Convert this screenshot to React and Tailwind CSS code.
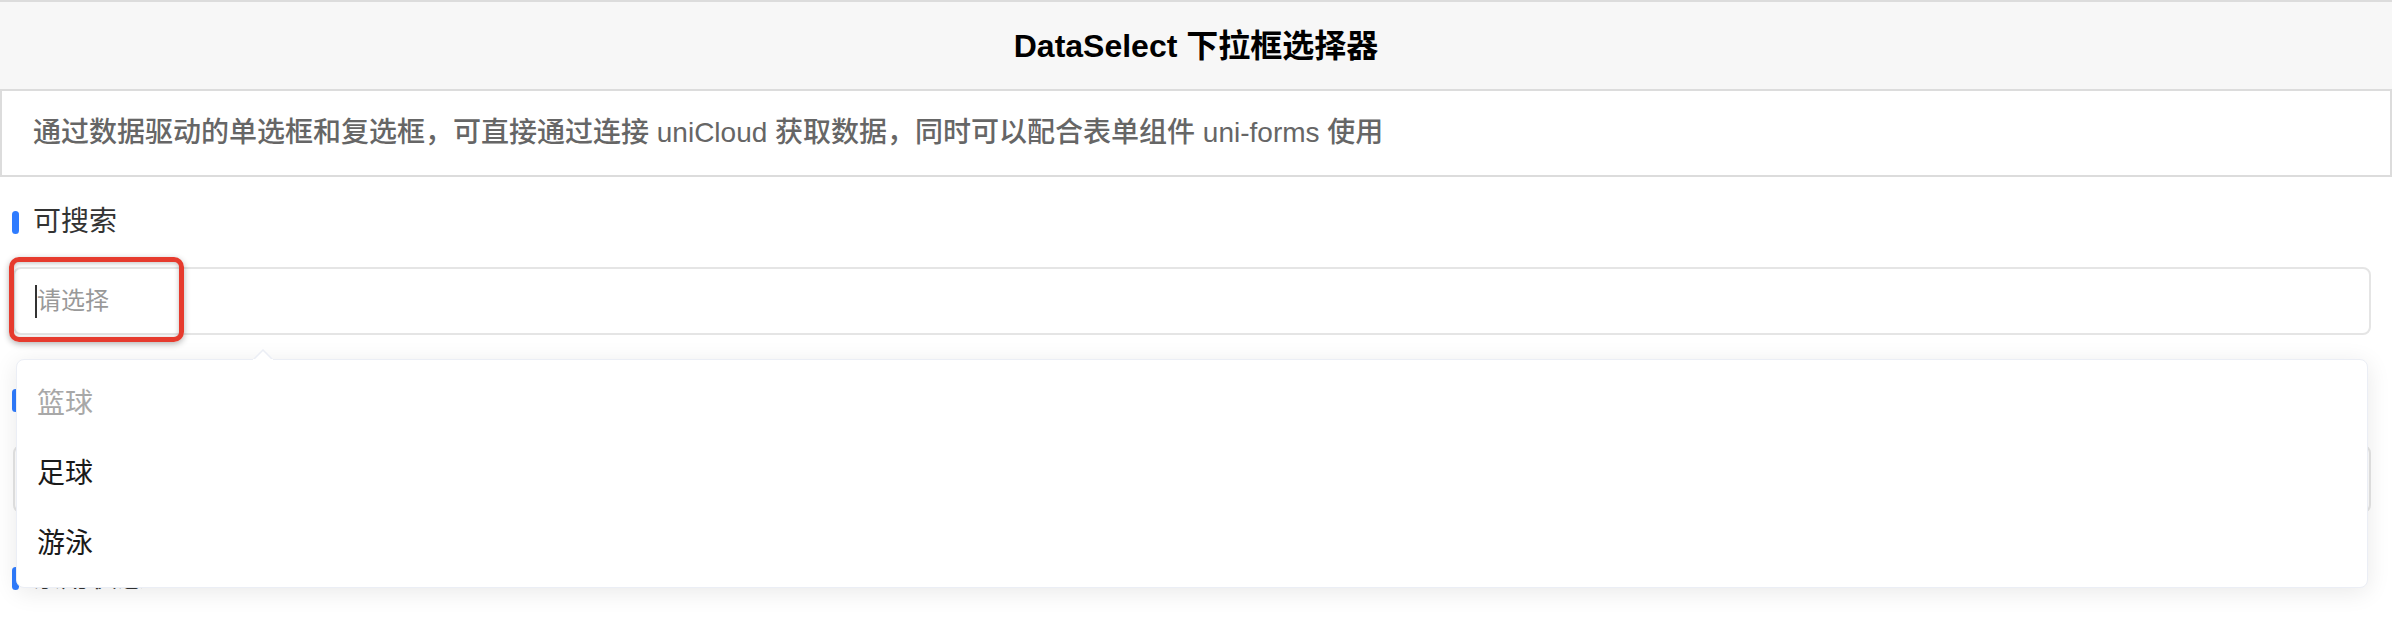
import React from 'react';

const font = { fontFamily: '"Liberation Sans", "Noto Sans CJK SC", sans-serif' };

const options = [
    { text: '篮球', disabled: true },
    { text: '足球' },
    { text: '游泳' },
];

function SectionTitle({ title }) {
    return (
        <div className="h-[90px] flex items-center pl-[12px]">
            <div className="w-[7px] h-[23px] rounded-full bg-[#2f7cff]"></div>
            <span className="ml-[14px] text-[28px] text-[#333]">{title}</span>
        </div>
    );
}

function SelectBox({ children }) {
    return (
        <div className="relative ml-[13px] mr-[21px] h-[68px] border-2 border-[#e5e5e5] rounded-[8px] bg-white flex items-center pl-[22px]">
            {children}
        </div>
    );
}

export default function App() {
    return (
        <div className="min-h-screen bg-white overflow-hidden" style={font}>
            <div className="h-[89px] border-t-2 border-[#dcdcdc] bg-[#f7f7f7] flex items-center justify-center">
                <h1 className="text-[32px] font-bold text-black">DataSelect 下拉框选择器</h1>
            </div>

            <div className="h-[88px] border-2 border-[#dcdcdc] flex items-center pl-[31px]">
                <p className="text-[28px] font-medium text-[#666]">
                    通过数据驱动的单选框和复选框，可直接通过连接 uniCloud 获取数据，同时可以配合表单组件 uni-forms 使用
                </p>
            </div>

            <div className="relative pb-[20px]">
                <SectionTitle title="可搜索" />
                <SelectBox>
                    <div className="absolute left-[20px] top-[16px] w-[2px] h-[33px] bg-[#333]"></div>
                    <span className="text-[24px] text-[#999]">请选择</span>
                </SelectBox>

                {/* dropdown popup */}
                <div className="absolute left-[16px] right-[24px] top-[182px] z-20">
                    <svg className="absolute left-[237px] -top-[10px]" width="20" height="11" viewBox="0 0 20 11">
                        <polygon points="0,11 10,1 20,11" fill="#fff" stroke="#ebeef5" strokeWidth="1.5" />
                        <rect x="0" y="10" width="20" height="2" fill="#fff" />
                    </svg>
                    <div className="bg-white border border-[#ebeef5] rounded-[8px] shadow-[0_4px_24px_rgba(0,0,0,0.09)] pt-[9px] pb-[8px]">
                        {options.map((o) => (
                            <div key={o.text} className="h-[70px] flex items-center pl-[20px]">
                                <span className={o.disabled ? 'text-[28px] text-[#a8a8a8]' : 'text-[28px] text-[#1a1a1a]'}>
                                    {o.text}
                                </span>
                            </div>
                        ))}
                    </div>
                </div>

                {/* annotation */}
                <div className="absolute left-[9px] top-[80px] w-[175px] h-[85px] border-[5px] border-[#e63b2e] rounded-[10px] shadow-[0_2px_6px_rgba(0,0,0,0.3),inset_0_1px_5px_rgba(0,0,0,0.25)] z-30"></div>
            </div>

            <div className="pb-[20px]">
                <SectionTitle title="本地数据" />
                <SelectBox>
                    <span className="text-[24px] text-[#999]">请选择</span>
                </SelectBox>
            </div>

            <div className="pb-[20px]">
                <SectionTitle title="禁用状态" />
                <SelectBox>
                    <span className="text-[24px] text-[#999]">请选择</span>
                </SelectBox>
            </div>
        </div>
    );
}
